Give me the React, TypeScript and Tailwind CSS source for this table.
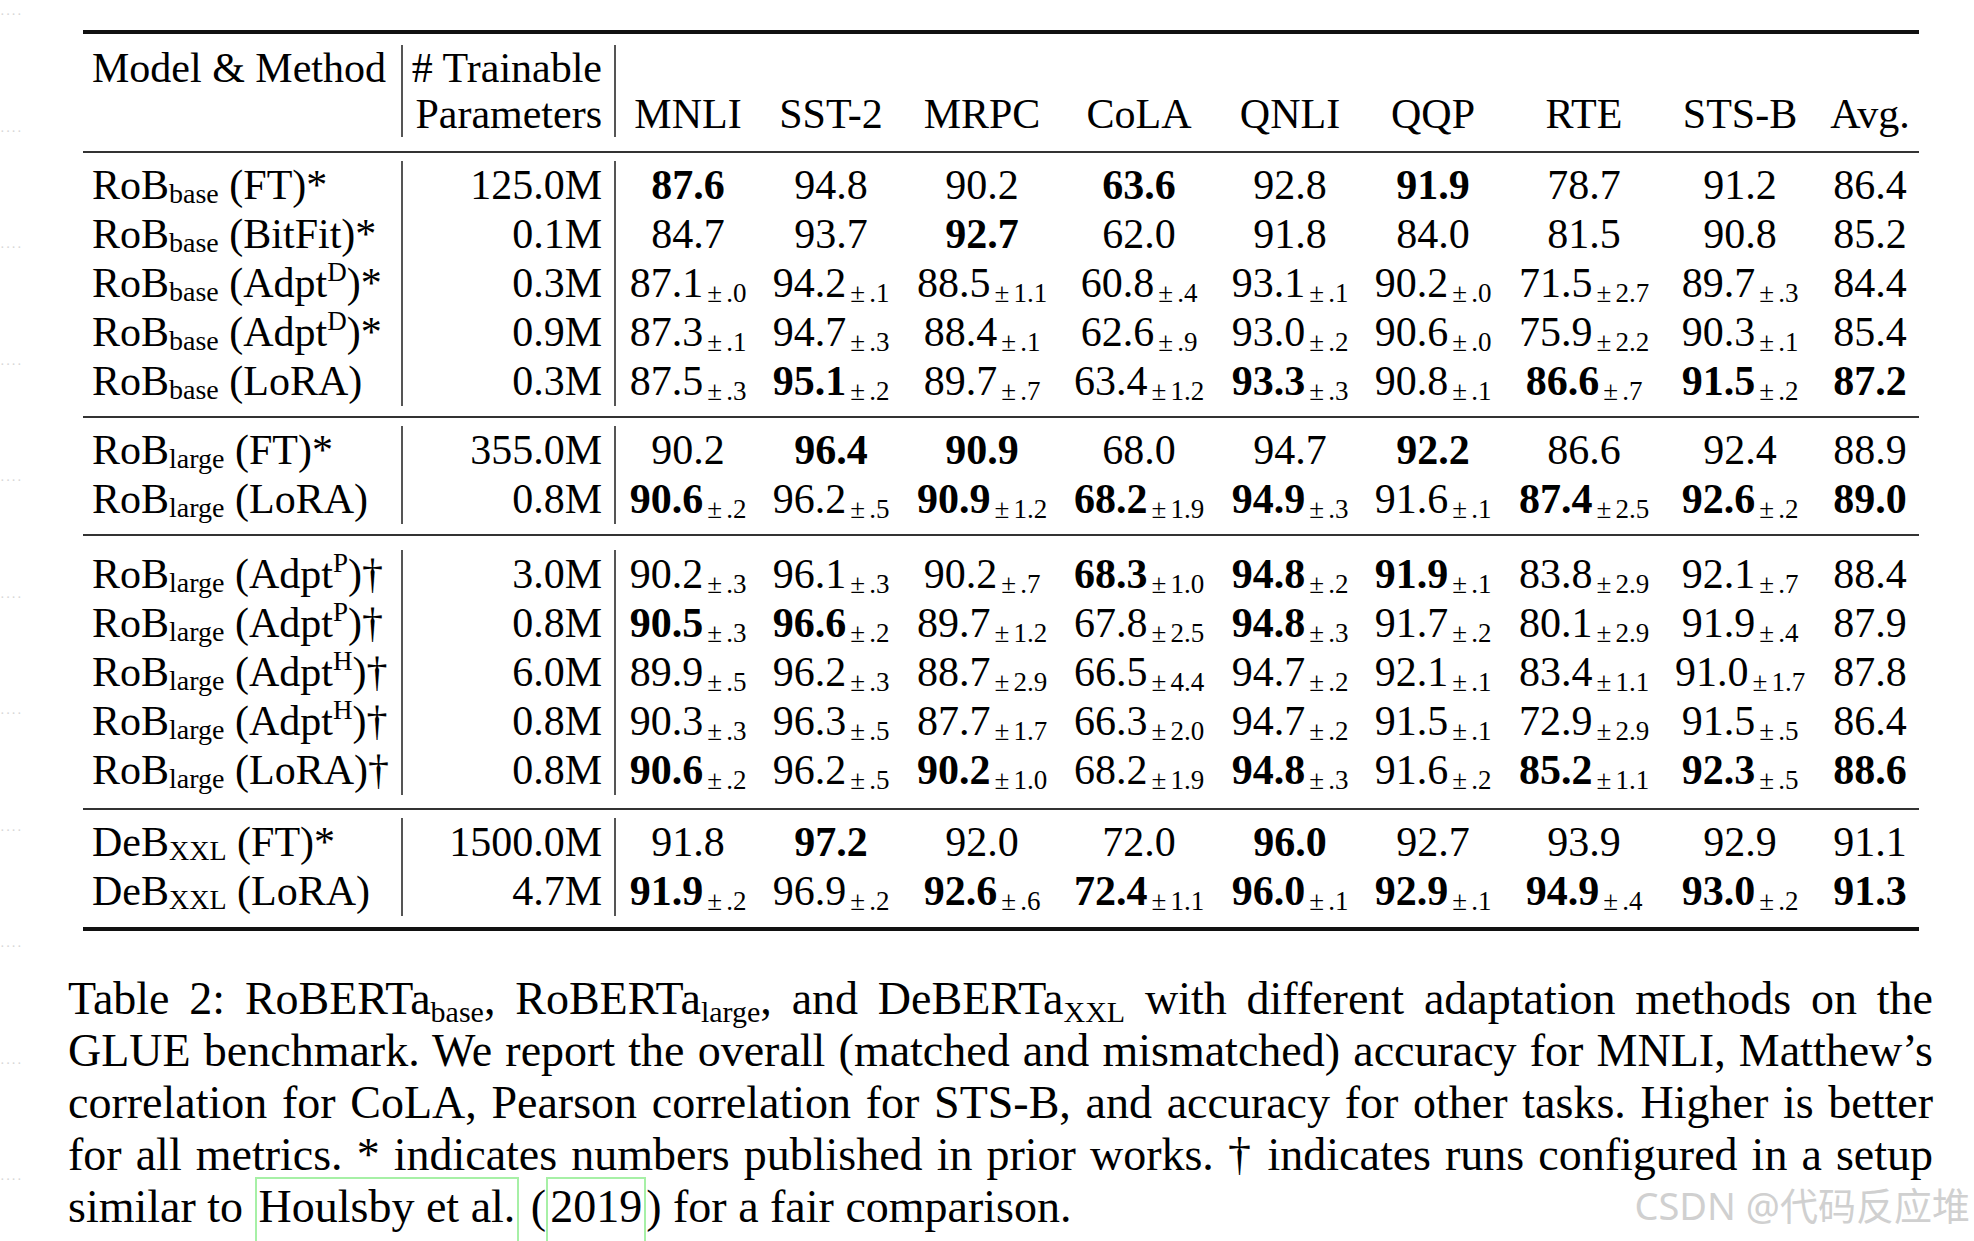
import React from "react";

type Cell = string; // "!" prefix = bold, "±" splits the spread
type ModelName = { b: string; sub: string; pre: string; sup?: string; post: string };
type Row = { name: ModelName; params: string; cells: Cell[] };

const cols = [
  { label: "MNLI", w: "w-[144px]" },
  { label: "SST-2", w: "w-[142px]" },
  { label: "MRPC", w: "w-[160px]" },
  { label: "CoLA", w: "w-[154px]" },
  { label: "QNLI", w: "w-[148px]" },
  { label: "QQP", w: "w-[138px]" },
  { label: "RTE", w: "w-[164px]" },
  { label: "STS-B", w: "w-[148px]" },
];

const rob = (sub: string, pre: string, post: string, sup?: string): ModelName => ({
  b: "RoB",
  sub,
  pre,
  sup,
  post,
});
const deb = (pre: string, post: string): ModelName => ({ b: "DeB", sub: "XXL", pre, post });

const groups: { pt: string; pb: string; rows: Row[] }[] = [
  {
    pt: "pt-[8px]",
    pb: "pb-[10px]",
    rows: [
      { name: rob("base", "(FT)", "*"), params: "125.0M", cells: ["!87.6", "94.8", "90.2", "!63.6", "92.8", "!91.9", "78.7", "91.2", "86.4"] },
      { name: rob("base", "(BitFit)", "*"), params: "0.1M", cells: ["84.7", "93.7", "!92.7", "62.0", "91.8", "84.0", "81.5", "90.8", "85.2"] },
      { name: rob("base", "(Adpt", ")*", "D"), params: "0.3M", cells: ["87.1±.0", "94.2±.1", "88.5±1.1", "60.8±.4", "93.1±.1", "90.2±.0", "71.5±2.7", "89.7±.3", "84.4"] },
      { name: rob("base", "(Adpt", ")*", "D"), params: "0.9M", cells: ["87.3±.1", "94.7±.3", "88.4±.1", "62.6±.9", "93.0±.2", "90.6±.0", "75.9±2.2", "90.3±.1", "85.4"] },
      { name: rob("base", "(LoRA)", ""), params: "0.3M", cells: ["87.5±.3", "!95.1±.2", "89.7±.7", "63.4±1.2", "!93.3±.3", "90.8±.1", "!86.6±.7", "!91.5±.2", "!87.2"] },
    ],
  },
  {
    pt: "pt-[8px]",
    pb: "pb-[10px]",
    rows: [
      { name: rob("large", "(FT)", "*"), params: "355.0M", cells: ["90.2", "!96.4", "!90.9", "68.0", "94.7", "!92.2", "86.6", "92.4", "88.9"] },
      { name: rob("large", "(LoRA)", ""), params: "0.8M", cells: ["!90.6±.2", "96.2±.5", "!90.9±1.2", "!68.2±1.9", "!94.9±.3", "91.6±.1", "!87.4±2.5", "!92.6±.2", "!89.0"] },
    ],
  },
  {
    pt: "pt-[14px]",
    pb: "pb-[13px]",
    rows: [
      { name: rob("large", "(Adpt", ")†", "P"), params: "3.0M", cells: ["90.2±.3", "96.1±.3", "90.2±.7", "!68.3±1.0", "!94.8±.2", "!91.9±.1", "83.8±2.9", "92.1±.7", "88.4"] },
      { name: rob("large", "(Adpt", ")†", "P"), params: "0.8M", cells: ["!90.5±.3", "!96.6±.2", "89.7±1.2", "67.8±2.5", "!94.8±.3", "91.7±.2", "80.1±2.9", "91.9±.4", "87.9"] },
      { name: rob("large", "(Adpt", ")†", "H"), params: "6.0M", cells: ["89.9±.5", "96.2±.3", "88.7±2.9", "66.5±4.4", "94.7±.2", "92.1±.1", "83.4±1.1", "91.0±1.7", "87.8"] },
      { name: rob("large", "(Adpt", ")†", "H"), params: "0.8M", cells: ["90.3±.3", "96.3±.5", "87.7±1.7", "66.3±2.0", "94.7±.2", "91.5±.1", "72.9±2.9", "91.5±.5", "86.4"] },
      { name: rob("large", "(LoRA)", "†"), params: "0.8M", cells: ["!90.6±.2", "96.2±.5", "!90.2±1.0", "68.2±1.9", "!94.8±.3", "91.6±.2", "!85.2±1.1", "!92.3±.5", "!88.6"] },
    ],
  },
  {
    pt: "pt-[8px]",
    pb: "pb-[11px]",
    rows: [
      { name: deb("(FT)", "*"), params: "1500.0M", cells: ["91.8", "!97.2", "92.0", "72.0", "!96.0", "92.7", "93.9", "92.9", "91.1"] },
      { name: deb("(LoRA)", ""), params: "4.7M", cells: ["!91.9±.2", "96.9±.2", "!92.6±.6", "!72.4±1.1", "!96.0±.1", "!92.9±.1", "!94.9±.4", "!93.0±.2", "!91.3"] },
    ],
  },
];

function Value({ cell }: { cell: Cell }) {
  const bold = cell.startsWith("!");
  const [main, spread] = (bold ? cell.slice(1) : cell).split("±");
  return (
    <>
      <span className={bold ? "font-bold" : ""}>{main}</span>
      {spread !== undefined && (
        <span className="relative top-[5px] text-[27px] leading-[0]">
          <span className="inline-block w-[23px] text-center">±</span>
          {spread}
        </span>
      )}
    </>
  );
}

function Name({ n }: { n: ModelName }) {
  return (
    <>
      {n.b}
      <span className="relative top-[4px] text-[28px] leading-[0]">{n.sub}</span> {n.pre}
      {n.sup && <span className="relative top-[-16px] text-[27px] leading-[0]">{n.sup}</span>}
      {n.post}
    </>
  );
}

function TableRow({ row }: { row: Row }) {
  return (
    <div className="flex h-[49px] leading-[49px] whitespace-nowrap">
      <div className="w-[320px] pl-[9px] border-r-2 border-[#555]">
        <Name n={row.name} />
      </div>
      <div className="w-[213px] pr-[12px] text-right border-r-2 border-[#555]">{row.params}</div>
      {row.cells.slice(0, 8).map((c, i) => (
        <div key={i} className={`${cols[i].w} text-center`}>
          <Value cell={c} />
        </div>
      ))}
      <div className="w-[105px] pl-[7px] text-center">
        <Value cell={row.cells[8]} />
      </div>
    </div>
  );
}

function Sub({ children }: { children: React.ReactNode }) {
  return <span className="relative top-[8px] text-[30px] leading-[0]">{children}</span>;
}

function LinkBox({ children }: { children: React.ReactNode }) {
  return <span className="border-2 border-[#a6f0a6] pb-[10px] pt-[2px] px-[2px]">{children}</span>;
}

export default function App() {
  return (
    <div className="relative w-[1974px] h-[1241px] bg-white overflow-hidden text-black font-['Liberation_Serif','Times_New_Roman',serif]">
      {/* faint marks at the left edge */}
      <div className="absolute left-0 top-[8px] flex flex-col text-[14px] leading-[14px] text-[#d6d6d6] tracking-[1px]">
        {Array.from({ length: 11 }).map((_, i) => (
          <div key={i} className="h-[116.5px]">····</div>
        ))}
      </div>

      {/* Table */}
      <div className="ml-[83px] pt-[30px] w-[1836px] text-[42px]">
        <div className="h-[4px] bg-[#111]" />

        {/* Header */}
        <div className="flex pt-[11px] pb-[14px] leading-[46px] whitespace-nowrap">
          <div className="w-[320px] pl-[9px] border-r-2 border-[#555]">Model &amp; Method</div>
          <div className="w-[213px] pr-[12px] text-right border-r-2 border-[#555]">
            <div># Trainable</div>
            <div>Parameters</div>
          </div>
          <div className="flex flex-col">
            <div className="h-[46px]" />
            <div className="flex">
              {cols.map((c) => (
                <div key={c.label} className={`${c.w} text-center`}>
                  {c.label}
                </div>
              ))}
              <div className="w-[105px] pl-[7px] text-center">Avg.</div>
            </div>
          </div>
        </div>
        <div className="h-[2px] bg-[#333]" />

        {groups.map((g, gi) => (
          <div key={gi}>
            <div className={`${g.pt} ${g.pb}`}>
              {g.rows.map((r, ri) => (
                <TableRow key={ri} row={r} />
              ))}
            </div>
            <div className={gi === groups.length - 1 ? "h-[4px] bg-[#111]" : "h-[2px] bg-[#333]"} />
          </div>
        ))}
      </div>

      {/* Caption */}
      <div className="ml-[68px] mt-[42px] w-[1865px] text-[46px] leading-[52px]">
        <div className="whitespace-nowrap text-justify [text-align-last:justify]">
          Table 2: RoBERTa<Sub>base</Sub>, RoBERTa<Sub>large</Sub>, and DeBERTa<Sub>XXL</Sub> with different adaptation methods on the
        </div>
        <div className="whitespace-nowrap text-justify [text-align-last:justify]">
          GLUE benchmark. We report the overall (matched and mismatched) accuracy for MNLI, Matthew’s
        </div>
        <div className="whitespace-nowrap text-justify [text-align-last:justify]">
          correlation for CoLA, Pearson correlation for STS-B, and accuracy for other tasks. Higher is better
        </div>
        <div className="whitespace-nowrap text-justify [text-align-last:justify]">
          for all metrics. * indicates numbers published in prior works. † indicates runs configured in a setup
        </div>
        <div className="whitespace-nowrap">
          similar to <LinkBox>Houlsby et al.</LinkBox> (<LinkBox>2019</LinkBox>) for a fair comparison.
        </div>
      </div>

      {/* watermark */}
      <div className="absolute right-[4px] bottom-[16px] text-[38px] leading-[40px] text-[#d0d0d0] font-['Noto_Sans','Noto_Sans_CJK_SC',sans-serif]">
        CSDN @代码反应堆
      </div>
    </div>
  );
}
